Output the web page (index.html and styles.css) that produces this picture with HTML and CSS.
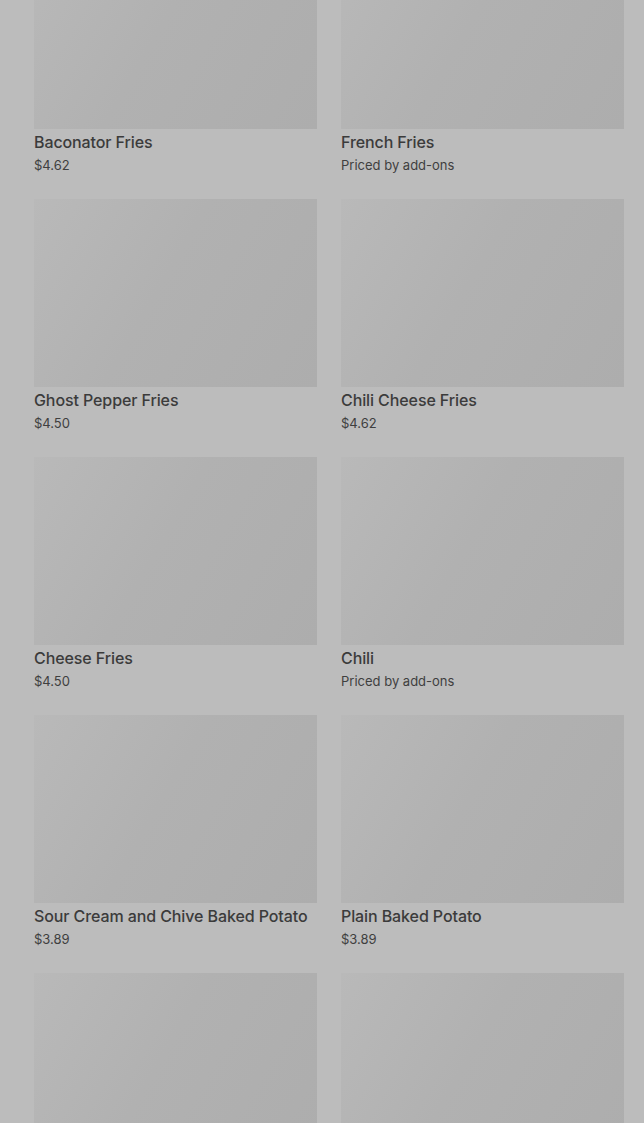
FILE: index.html
```html
<!DOCTYPE html>
<html lang="en">
<head>
  <meta charset="UTF-8" />
  <meta name="viewport" content="width=device-width, initial-scale=1.0"/>
  <title>Menu | Fries &amp; Sides</title>
  <link rel="stylesheet" href="styles.css">
</head>
<body>

<section class="menu">
  <div class="menu-grid">
    <div class="item">
      <div class="item-img"></div>
      <h3>Baconator Fries</h3>
      <p>$4.62</p>
    </div>
    <div class="item">
      <div class="item-img"></div>
      <h3>French Fries</h3>
      <p>Priced by add-ons</p>
    </div>
    <div class="item">
      <div class="item-img"></div>
      <h3>Ghost Pepper Fries</h3>
      <p>$4.50</p>
    </div>
    <div class="item">
      <div class="item-img"></div>
      <h3>Chili Cheese Fries</h3>
      <p>$4.62</p>
    </div>
    <div class="item">
      <div class="item-img"></div>
      <h3>Cheese Fries</h3>
      <p>$4.50</p>
    </div>
    <div class="item">
      <div class="item-img"></div>
      <h3>Chili</h3>
      <p>Priced by add-ons</p>
    </div>
    <div class="item">
      <div class="item-img"></div>
      <h3>Sour Cream and Chive Baked Potato</h3>
      <p>$3.89</p>
    </div>
    <div class="item">
      <div class="item-img"></div>
      <h3>Plain Baked Potato</h3>
      <p>$3.89</p>
    </div>
    <div class="item">
      <div class="item-img"></div>
      <h3>&nbsp;</h3>
      <p>&nbsp;</p>
    </div>
    <div class="item">
      <div class="item-img"></div>
      <h3>&nbsp;</h3>
      <p>&nbsp;</p>
    </div>
  </div>
</section>

</body>
</html>
```

FILE: styles.css
```css
body {
  font-family: 'Inter', 'Noto Sans', sans-serif;
  margin: 0;
  background-color: #bcbcbc; /* dimmed page */
  color: #3a3a3a;
  overflow: hidden;
}

.menu {
  padding: 0 20px 0 34px;
  margin-top: -59px; /* page is scrolled down a bit */
}

.menu-grid {
  display: grid;
  grid-template-columns: 1fr 1fr;
  column-gap: 24px;
  row-gap: 24px;
}

.item-img {
  height: 188px;
  background: linear-gradient(120deg, #b9b9b9 0%, #b1b1b1 45%, #adadad 100%);
}

.item h3 {
  margin: 3px 0 0;
  font-size: 16px;
  line-height: 20px;
  font-weight: 500;
  color: #3b3b3b;
  letter-spacing: -0.1px;
}

.item p {
  margin: 3px 0 0;
  font-size: 13px;
  line-height: 20px;
  color: #3f3f3f;
}
```
